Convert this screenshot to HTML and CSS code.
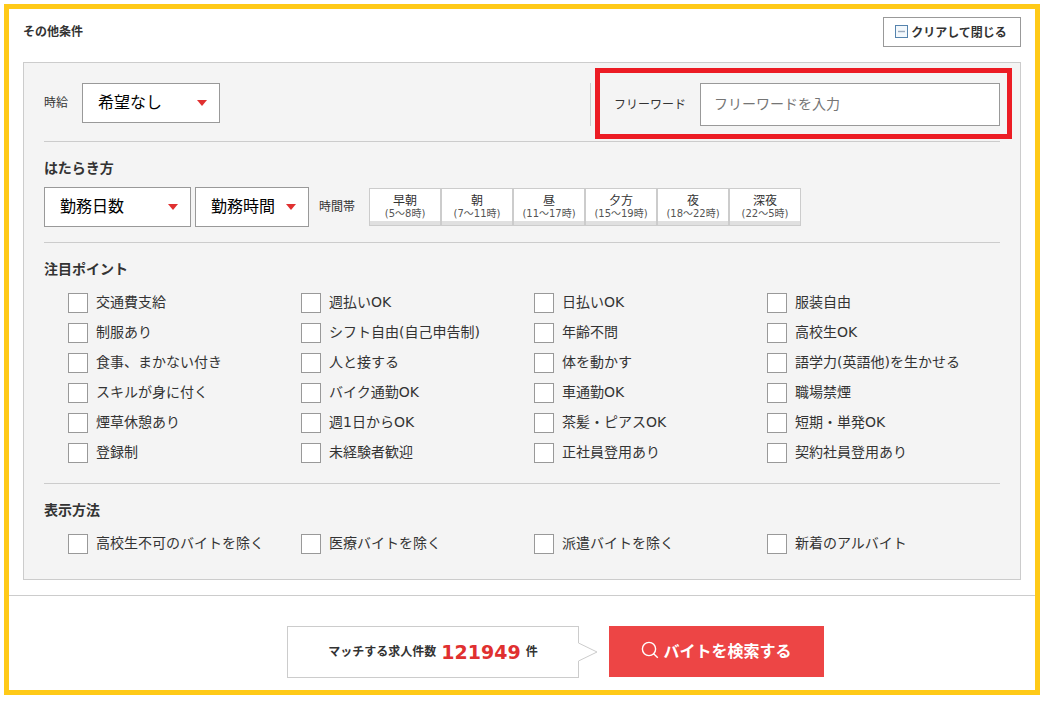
FILE: index.html
```html
<!DOCTYPE html>
<html lang="ja">
<head>
<meta charset="utf-8">
<meta name="viewport" content="width=device-width, initial-scale=1">
<title>その他条件</title>
<link rel="stylesheet" href="styles.css">
</head>
<body>
<form class="search">
  <div class="conditions">
    <header class="head">
      <h1 class="head-title">その他条件</h1>
      <button type="button" class="clear">
        <svg class="clear-icon" width="13" height="13" viewBox="0 0 13 13" aria-hidden="true"><rect x=".5" y=".5" width="12" height="12" fill="#f3f8fc" stroke="#5583ad"/><path d="M3 6.5h7" stroke="#9aaabd" stroke-width="1.4"/></svg>
        <span>クリアして閉じる</span>
      </button>
    </header>

    <div class="panel">
      <section class="section section-first">
        <div class="field">
          <label class="field-label" for="wage">時給</label>
          <span class="select select-wage"><select id="wage"><option>希望なし</option></select></span>
        </div>
        <div class="freeword">
          <label class="field-label" for="word">フリーワード</label>
          <input class="word" id="word" type="text" placeholder="フリーワードを入力">
        </div>
      </section>

      <section class="section">
        <h2 class="title">はたらき方</h2>
        <div class="work">
          <span class="select select-days"><select aria-label="勤務日数"><option>勤務日数</option></select></span>
          <span class="select select-hours"><select aria-label="勤務時間"><option>勤務時間</option></select></span>
          <span class="slots-label" id="slots">時間帯</span>
          <div class="slots" role="group" aria-labelledby="slots">
            <button type="button" class="slot">早朝<small>(5～8時)</small></button>
            <button type="button" class="slot">朝<small>(7～11時)</small></button>
            <button type="button" class="slot">昼<small>(11～17時)</small></button>
            <button type="button" class="slot">夕方<small>(15～19時)</small></button>
            <button type="button" class="slot">夜<small>(18～22時)</small></button>
            <button type="button" class="slot">深夜<small>(22～5時)</small></button>
          </div>
        </div>
      </section>

      <section class="section section-points">
        <h2 class="title title-checks">注目ポイント</h2>
        <div class="checks">
          <label class="check"><input type="checkbox"><span>交通費支給</span></label>
          <label class="check"><input type="checkbox"><span>週払いOK</span></label>
          <label class="check"><input type="checkbox"><span>日払いOK</span></label>
          <label class="check"><input type="checkbox"><span>服装自由</span></label>
          <label class="check"><input type="checkbox"><span>制服あり</span></label>
          <label class="check"><input type="checkbox"><span>シフト自由(自己申告制)</span></label>
          <label class="check"><input type="checkbox"><span>年齢不問</span></label>
          <label class="check"><input type="checkbox"><span>高校生OK</span></label>
          <label class="check"><input type="checkbox"><span>食事、まかない付き</span></label>
          <label class="check"><input type="checkbox"><span>人と接する</span></label>
          <label class="check"><input type="checkbox"><span>体を動かす</span></label>
          <label class="check"><input type="checkbox"><span>語学力(英語他)を生かせる</span></label>
          <label class="check"><input type="checkbox"><span>スキルが身に付く</span></label>
          <label class="check"><input type="checkbox"><span>バイク通勤OK</span></label>
          <label class="check"><input type="checkbox"><span>車通勤OK</span></label>
          <label class="check"><input type="checkbox"><span>職場禁煙</span></label>
          <label class="check"><input type="checkbox"><span>煙草休憩あり</span></label>
          <label class="check"><input type="checkbox"><span>週1日からOK</span></label>
          <label class="check"><input type="checkbox"><span>茶髪・ピアスOK</span></label>
          <label class="check"><input type="checkbox"><span>短期・単発OK</span></label>
          <label class="check"><input type="checkbox"><span>登録制</span></label>
          <label class="check"><input type="checkbox"><span>未経験者歓迎</span></label>
          <label class="check"><input type="checkbox"><span>正社員登用あり</span></label>
          <label class="check"><input type="checkbox"><span>契約社員登用あり</span></label>
        </div>
      </section>

      <section class="section section-last">
        <h2 class="title title-checks">表示方法</h2>
        <div class="checks">
          <label class="check"><input type="checkbox"><span>高校生不可のバイトを除く</span></label>
          <label class="check"><input type="checkbox"><span>医療バイトを除く</span></label>
          <label class="check"><input type="checkbox"><span>派遣バイトを除く</span></label>
          <label class="check"><input type="checkbox"><span>新着のアルバイト</span></label>
        </div>
      </section>
    </div>
  </div>

  <footer class="foot">
    <p class="count">
      <span>マッチする求人件数</span><strong class="count-number">121949</strong><span>件</span>
      <svg class="count-tip" width="20" height="20" viewBox="0 0 20 20" aria-hidden="true"><path d="M0 1h1L19 10 1 19H0z" fill="#fff"/><path d="M.5 0v1L19 10 .5 19v1" fill="none" stroke="#ccc"/></svg>
    </p>
    <button type="submit" class="submit">
      <svg width="18" height="18" viewBox="0 0 18 18" fill="none" stroke="#fff" stroke-width="1.4" aria-hidden="true"><circle cx="8" cy="8" r="6.6"/><path d="M12.4 12.6l4.4 4.2"/></svg>
      <span>バイトを検索する</span>
    </button>
  </footer>
</form>
</body>
</html>
```

FILE: styles.css
```css
* { box-sizing: border-box; }

body {
  margin: 4px;
  background: #fff;
  color: #333;
  font-family: "DejaVu Sans", "Noto Sans CJK JP", sans-serif;
  font-size: 14px;
  line-height: 20px;
}

h1, h2, p { margin: 0; }

button, input, select {
  margin: 0;
  border-radius: 0;
  color: inherit;
  font-family: inherit;
}

.search { border: 5px solid #ffca18; }

.conditions {
  padding: 8px 14px 15px;
  border-bottom: 1px solid #ccc;
}

.head {
  display: flex;
  justify-content: space-between;
  align-items: center;
  margin-bottom: 15px;
}

.head-title { font-size: 12px; }

.clear {
  display: flex;
  align-items: center;
  justify-content: center;
  gap: 3px;
  width: 138px;
  height: 30px;
  padding: 0 2px 2px 0;
  border: 1px solid #999;
  background: #fff;
  font-size: 12px;
  font-weight: bold;
}

.panel {
  padding: 0 20px;
  border: 1px solid #ccc;
  background: #f4f4f4;
}

.section {
  padding: 16px 0 15px;
  border-bottom: 1px solid #ccc;
}

.section-first {
  display: flex;
  justify-content: space-between;
  padding-top: 20px;
}

.section-points { padding-bottom: 20px; }

.section-last {
  padding-bottom: 25px;
  border-bottom: 0;
}

.title {
  margin-bottom: 9px;
  font-size: 14px;
}

.title-checks { margin-bottom: 14px; }

.field {
  display: flex;
  align-self: flex-start;
  align-items: center;
  gap: 14px;
}

.field-label { font-size: 12px; }

.select {
  position: relative;
  height: 40px;
}

.select select {
  width: 100%;
  height: 100%;
  padding: 0 15px 2px;
  border: 1px solid #999;
  appearance: none;
  background: #fff;
  color: #000;
  font-size: 16px;
}

.select::after {
  content: "";
  position: absolute;
  top: 17px;
  right: 13px;
  border: 5px solid transparent;
  border-top: 6px solid #e03030;
  border-bottom: 0;
  pointer-events: none;
}

.select-wage { width: 138px; }
.select-days { width: 147px; }
.select-hours { width: 114px; }

.freeword {
  position: relative;
  display: flex;
  align-items: center;
  gap: 14px;
  padding-left: 23px;
  border-left: 1px solid #ccc;
}

/* Emphasis frame around the keyword field */
.freeword::after {
  content: "";
  position: absolute;
  inset: -15px -12px -13px 4px;
  border: 5px solid #ec1c24;
  pointer-events: none;
}

.word {
  width: 300px;
  height: 43px;
  padding: 0 13px 2px;
  border: 1px solid #999;
  background: #fff;
  font-size: 14px;
}

.word::placeholder { color: #757575; }

.work {
  display: flex;
  align-items: center;
  gap: 4px;
}

.slots-label {
  margin: 0 10px 0 6px;
  font-size: 12px;
}

.slots { display: flex; }

.slot {
  width: 72px;
  height: 38px;
  padding: 4px 0 0;
  border: 1px solid #ccc;
  background: #fff;
  box-shadow: inset 0 -4px #e0e0e0;
  font-size: 12px;
  line-height: 14px;
  text-align: center;
}

.slot small {
  display: block;
  height: 16px;
  color: #555;
  font-size: 10px;
  line-height: 12px;
}

.checks {
  display: grid;
  grid-template-columns: repeat(4, 1fr);
  gap: 10px 0;
  padding-left: 24px;
}

.check {
  display: flex;
  gap: 8px;
  height: 20px;
  white-space: nowrap;
  line-height: 18px;
}

.check input {
  flex: none;
  width: 20px;
  height: 20px;
  margin: 0;
  border: 1px solid #999;
  appearance: none;
  background: #fff;
}

.check input:checked { background: #e03030; }

.foot {
  display: flex;
  justify-content: center;
  gap: 30px;
  padding: 30px 0 12px 67px;
}

.count {
  position: relative;
  display: flex;
  align-items: center;
  justify-content: center;
  gap: 5px;
  width: 292px;
  height: 52px;
  border: 1px solid #ccc;
  font-size: 12px;
  font-weight: bold;
}

.count-number {
  color: #e03030;
  font-size: 19px;
}

.count-tip {
  position: absolute;
  top: 15px;
  left: 100%;
}

.submit {
  display: flex;
  align-items: center;
  justify-content: center;
  gap: 4px;
  width: 215px;
  height: 51px;
  padding: 0 0 3px;
  border: 0;
  background: #ed4545;
  color: #fff;
  font-size: 16px;
  font-weight: bold;
}
```
